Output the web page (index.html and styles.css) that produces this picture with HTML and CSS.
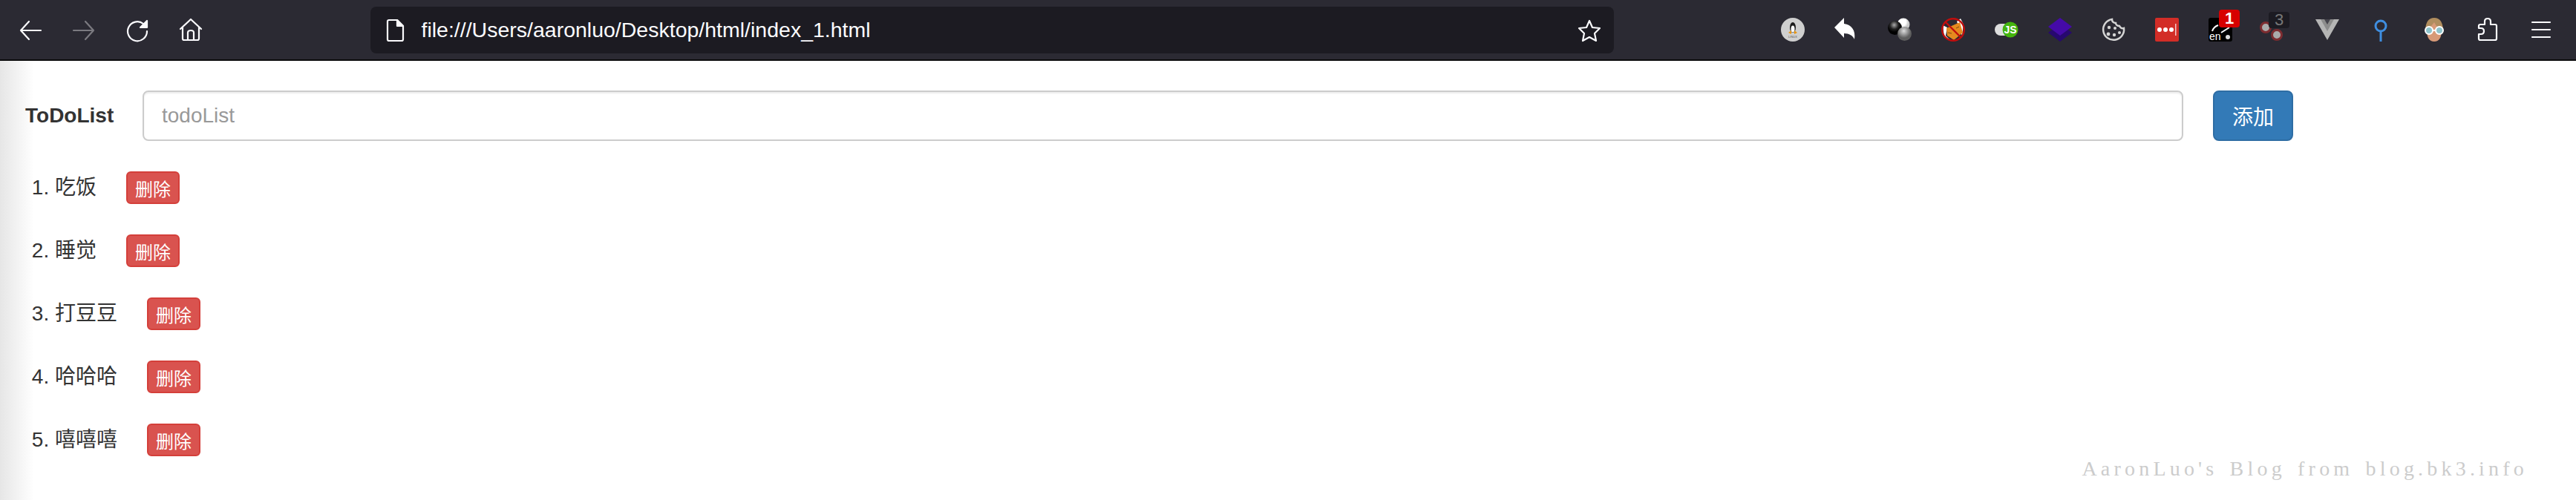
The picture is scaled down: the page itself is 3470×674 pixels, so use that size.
FILE: index.html
```html
<!DOCTYPE html>
<html lang="en">
<head>
    <meta charset="UTF-8">
    <meta name="viewport" content="width=device-width, initial-scale=1.0">
    <link rel="stylesheet" href="styles.css">
    <title>ToDoList</title>
</head>
<body>
    <!-- Browser toolbar -->
    <div class="toolbar">
        <div class="tool-group">
            <span class="tool">
                <svg class="icon line" viewBox="0 0 32 32"><path d="M30 17H3M14 5L3 17L14 29"/></svg>
            </span>
            <span class="tool">
                <svg class="icon line dim" viewBox="0 0 32 32"><path d="M2 17H29M18 5L29 17L18 29"/></svg>
            </span>
            <span class="tool">
                <svg class="icon line" viewBox="0 0 32 32"><path d="M24 8A13 13 0 1 0 29 18"/><path class="solid" d="M20 13L29 4V13Z"/></svg>
            </span>
            <span class="tool">
                <svg class="icon line" viewBox="0 0 32 32"><path d="M2 15L16 2L30 15M5 13V28Q5 30 7 30H25Q27 30 27 28V13M12 30V20Q12 17 16 17Q20 17 20 20V30"/></svg>
            </span>
        </div>

        <div class="url-bar">
            <svg class="icon line file-icon" viewBox="0 0 32 32"><path d="M6 4Q6 2 8 2H19L27 10V28Q27 30 25 30H8Q6 30 6 28Z"/><path class="solid" d="M19 2L27 10H19Z"/></svg>
            <span class="url-text">file:///Users/aaronluo/Desktop/html/index_1.html</span>
            <svg class="icon line star-icon" viewBox="0 0 32 32"><path d="M16 3L20 12L30 13L23 20L25 30L16 25L7 30L9 20L2 13L12 12Z"/></svg>
        </div>

        <div class="tool-group">
            <span class="tool">
                <svg class="icon" viewBox="0 0 32 32">
                    <circle cx="16" cy="16" r="16" fill="#cfcfcf"/>
                    <ellipse cx="16" cy="13" rx="4" ry="7" fill="#1c1c1c"/>
                    <ellipse cx="16" cy="15" rx="2.500" ry="4.500" fill="#fff"/>
                    <path d="M10 20L14 17L14 22ZM22 20L18 17L18 22Z" fill="#e8940c"/>
                    <text x="16" y="27" class="tiny">LINUX</text>
                </svg>
            </span>
            <span class="tool">
                <svg class="icon" viewBox="0 0 32 32"><path d="M0 13L13 0V8C23 9 29 17 27 29C25 24 20 21 13 21V27Z" fill="#fff"/></svg>
            </span>
            <span class="tool">
                <svg class="icon" viewBox="0 0 32 32">
                    <defs>
                        <radialGradient id="ballWhite" cx="0.4" cy="0.3"><stop offset="0.6" stop-color="#fff"/><stop offset="1" stop-color="#c8c8c8"/></radialGradient>
                        <radialGradient id="ballBlack" cx="0.45" cy="0.3"><stop offset="0" stop-color="#aaa"/><stop offset="0.6" stop-color="#222"/><stop offset="1" stop-color="#000"/></radialGradient>
                        <radialGradient id="ballGrey" cx="0.45" cy="0.3"><stop offset="0" stop-color="#ddd"/><stop offset="1" stop-color="#5e5e5e"/></radialGradient>
                    </defs>
                    <circle cx="21" cy="9" r="8.500" fill="url(#ballWhite)"/>
                    <circle cx="9.500" cy="13.500" r="9.500" fill="url(#ballBlack)"/>
                    <circle cx="22.500" cy="21.500" r="9.500" fill="url(#ballGrey)"/>
                </svg>
            </span>
            <span class="tool">
                <svg class="icon" viewBox="0 0 32 32">
                    <circle cx="16" cy="16" r="15" fill="#2b2a33"/>
                    <path d="M2 10L8 13L6 24L13 31L4 26ZM30 9L26 1L21 5L28 24Z" fill="#fff"/>
                    <path d="M7 14L25 6L29 20L17 30L8 24Z" fill="#e58a1f"/>
                    <path d="M9 20L14 21M20 14L24 12" stroke="#7a4a10" stroke-width="1"/>
                    <circle cx="16" cy="16" r="14.800" fill="none" stroke="#c00d0d" stroke-width="2.400"/>
                    <path d="M6 6L26 26" stroke="#c00d0d" stroke-width="2.400"/>
                </svg>
            </span>
            <span class="tool">
                <svg class="icon" viewBox="0 0 32 32">
                    <rect x="0" y="8" width="24" height="16" rx="8" fill="#dedede"/>
                    <circle cx="21" cy="16" r="10.500" fill="#43b30d"/>
                    <text x="21" y="21" class="js-text">JS</text>
                </svg>
            </span>
            <span class="tool">
                <svg class="icon" viewBox="0 0 32 32">
                    <path d="M16 8L32 20L16 32L0 20Z" fill="#27096f"/>
                    <path d="M16 0L32 12L16 24L0 12Z" fill="#450aa8"/>
                </svg>
            </span>
            <span class="tool">
                <svg class="icon" viewBox="0 0 32 32">
                    <path d="M14 2A14 14 0 1 0 30 14C27 15 25 13 24 11C21 11 19 9 19 7C16 7 14 5 14 2Z" fill="none" stroke="#d4d4d4" stroke-width="2.500"/>
                    <g fill="#d4d4d4"><circle cx="10" cy="13" r="2.200"/><circle cx="18" cy="14" r="2"/><circle cx="9" cy="22" r="2.400"/><circle cx="17" cy="23" r="2.200"/><circle cx="24" cy="20" r="2"/></g>
                </svg>
            </span>
            <span class="tool">
                <svg class="icon" viewBox="0 0 32 32">
                    <rect width="32" height="32" rx="2" fill="#d32d27"/>
                    <g fill="#fff"><circle cx="6" cy="16" r="3"/><circle cx="14" cy="16" r="3"/><circle cx="22" cy="16" r="3"/><rect x="27" y="8" width="1.500" height="16" fill="#f4c9c7"/></g>
                </svg>
            </span>
            <span class="tool">
                <svg class="icon" viewBox="0 0 32 32">
                    <rect width="32" height="32" rx="3" fill="#000"/>
                    <path d="M5 18Q7 12 13 10M17 20L28 13" fill="none" stroke="#fff" stroke-width="2"/>
                    <text x="1" y="30" class="en-text">en</text>
                    <circle cx="26" cy="26" r="3" fill="#ddd"/>
                </svg>
                <span class="badge badge-red">1</span>
            </span>
            <span class="tool">
                <svg class="icon" viewBox="0 0 32 32">
                    <circle cx="5" cy="13" r="6.500" fill="#aaa" stroke="#7d2c30" stroke-width="3"/>
                    <circle cx="20" cy="23" r="6.500" fill="#aaa" stroke="#7d2c30" stroke-width="3"/>
                </svg>
                <span class="badge badge-dark">3</span>
            </span>
            <span class="tool">
                <svg class="icon" viewBox="0 0 32 32">
                    <path d="M0 2H32L16 30Z" fill="#b5b5b5"/>
                    <path d="M7 2H25L16 18Z" fill="#8c8c8c"/>
                    <path d="M12 2H20L16 9Z" fill="#45444c"/>
                </svg>
            </span>
            <span class="tool">
                <svg class="icon" viewBox="0 0 32 32">
                    <circle cx="16" cy="11" r="7" fill="none" stroke="#3f8ee0" stroke-width="3"/>
                    <path d="M16 18V32" stroke="#3f8ee0" stroke-width="3"/>
                </svg>
            </span>
            <span class="tool">
                <svg class="icon" viewBox="0 0 32 32">
                    <path d="M4 16Q5 0 16 0Q27 0 28 16Z" fill="#b08d5e"/>
                    <path d="M6 16Q10 14 16 6Q20 14 26 16Q26 32 16 32Q6 32 6 16Z" fill="#d79a78"/>
                    <circle cx="9" cy="17" r="5" fill="#8fc4cc" stroke="#fff" stroke-width="2"/>
                    <circle cx="23" cy="17" r="5" fill="#8fc4cc" stroke="#fff" stroke-width="2"/>
                    <path d="M14 17H18" stroke="#fff" stroke-width="2"/>
                </svg>
            </span>
            <span class="tool">
                <svg class="icon line" viewBox="0 0 32 32"><path d="M6 30Q4 30 4 28V22H7Q11 22 11 18Q11 14 7 14H4V11Q4 9 6 9H12V5Q12 1 16 1Q20 1 20 5V9H26Q28 9 28 11V28Q28 30 26 30Z"/></svg>
            </span>
            <span class="tool">
                <svg class="icon line" viewBox="0 0 32 32"><path d="M4 6H28M4 16H28M4 26H28"/></svg>
            </span>
        </div>
    </div>

    <div class="page">
        <!-- Form to add items -->
        <form class="todo-form">
            <label class="todo-label" for="todoInput">ToDoList</label>
            <input class="todo-input" type="text" id="todoInput" placeholder="todoList">
            <button class="btn btn-add" type="button">添加</button>
        </form>

        <!-- Item list -->
        <ol class="todo-list">
            <li>吃饭<button class="btn btn-delete" type="button">删除</button></li>
            <li>睡觉<button class="btn btn-delete" type="button">删除</button></li>
            <li>打豆豆<button class="btn btn-delete" type="button">删除</button></li>
            <li>哈哈哈<button class="btn btn-delete" type="button">删除</button></li>
            <li>嘻嘻嘻<button class="btn btn-delete" type="button">删除</button></li>
        </ol>

        <div class="watermark">AaronLuo's Blog from blog.bk3.info</div>
    </div>
</body>
</html>
```

FILE: styles.css
```css
html, body {
    height: 100%;
}

body {
    margin: 0;
    display: flex;
    flex-direction: column;
    overflow: hidden;
    background-color: #fff;
    color: #333;
    font-family: "Liberation Sans", "Noto Sans CJK SC", sans-serif;
    font-size: 28px;
}

/* Toolbar */
.toolbar {
    display: flex;
    align-items: center;
    flex-shrink: 0;
    height: 80px;
    padding: 0 11px 0 5px;
    justify-content: space-between;
    background-color: #2b2a33;
    border-bottom: 2px solid #0c0c0d;
}

.tool-group {
    display: flex;
    align-items: center;
}

.tool {
    position: relative;
    display: flex;
    align-items: center;
    justify-content: center;
    width: 72px;
    height: 64px;
}

.icon {
    width: 32px;
    height: 32px;
    overflow: visible;
}

.line {
    fill: none;
    stroke: #fbfbfe;
    stroke-width: 2.200;
    stroke-linecap: round;
    stroke-linejoin: round;
}

.line .solid {
    fill: #fbfbfe;
}

.dim {
    stroke: #7b7a80;
}

.url-bar {
    display: flex;
    align-items: center;
    width: 1675px;
    height: 63px;
    margin-top: 1px;
    padding: 0 17px;
    box-sizing: border-box;
    background-color: #1c1b22;
    border-radius: 8px;
}

.file-icon {
    margin-right: 20px;
}

.url-text {
    flex-grow: 1;
    color: #fbfbfe;
    font-size: 28.500px;
}

.tiny {
    fill: #555;
    font-size: 4px;
    text-anchor: middle;
}

.js-text {
    fill: #fff;
    font-size: 14px;
    font-weight: bold;
    text-anchor: middle;
}

.en-text {
    fill: #fff;
    font-size: 14px;
}

.badge {
    position: absolute;
    display: flex;
    align-items: center;
    justify-content: center;
    border-radius: 4px;
    font-size: 22px;
}

.badge-red {
    top: 5px;
    left: 34px;
    width: 28px;
    height: 24px;
    background-color: #d70000;
    color: #fff;
    font-weight: bold;
}

.badge-dark {
    top: 8px;
    left: 29px;
    width: 28px;
    height: 22px;
    background-color: #1c1b22;
    color: #777;
}

/* Page content */
.page {
    position: relative;
    flex-grow: 1;
    padding-top: 40px;
    background: linear-gradient(to right, #e6e6e6, #fff 46px);
}

.todo-form {
    display: flex;
    align-items: center;
    padding: 0 381px 0 34px;
}

.todo-label {
    width: 158px;
    flex-shrink: 0;
    font-weight: bold;
}

.todo-input {
    flex-grow: 1;
    height: 68px;
    padding: 0 24px;
    box-sizing: border-box;
    border: 2px solid #ccc;
    border-radius: 8px;
    box-shadow: inset 0 2px 2px rgba(0, 0, 0, 0.075);
    color: #555;
    font-family: inherit;
    font-size: 28px;
}

.todo-input::placeholder {
    color: #999;
}

.btn {
    box-sizing: border-box;
    color: #fff;
    font-family: inherit;
    cursor: pointer;
}

.btn-add {
    width: 108px;
    height: 68px;
    margin-left: 40px;
    padding: 0;
    background-color: #337ab7;
    border: 2px solid #2e6da4;
    border-radius: 8px;
    font-size: 28px;
}

.todo-list {
    margin: 41px 0 0;
    padding-left: 74px;
}

.todo-list li {
    height: 85px;
    line-height: 44px;
}

.btn-delete {
    width: 72px;
    height: 44px;
    margin-left: 40px;
    margin-bottom: 4px;
    padding: 0;
    vertical-align: middle;
    background-color: #d9534f;
    border: 2px solid #d43f3a;
    border-radius: 6px;
    font-size: 24px;
}

.watermark {
    position: absolute;
    top: 534px;
    right: 65px;
    color: #ccc;
    font-family: "Liberation Serif", serif;
    font-size: 28px;
    letter-spacing: 5.200px;
    word-spacing: 4px;
    white-space: nowrap;
}
```
